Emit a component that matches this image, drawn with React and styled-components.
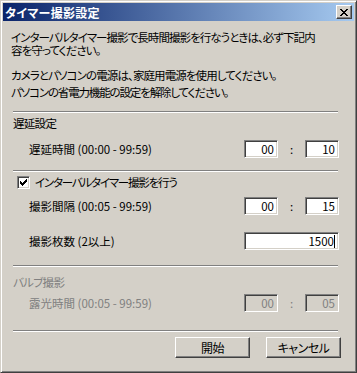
import styled, { createGlobalStyle } from 'styled-components';

const GlobalStyle = createGlobalStyle`
    html, body {
        margin: 0;
        padding: 0;
        background: #d4d0c8;
    }
    body {
        font-family: "Noto Sans CJK JP", sans-serif;
    }
`

const Window = styled.div`
    width: 357px;
    height: 373px;
    box-sizing: border-box;
    display: flex;
    flex-direction: column;
    padding: 2px;
    background: #d4d0c8;
    border: 1px solid;
    border-color: #d4d0c8 #404040 #404040 #d4d0c8;
    box-shadow: inset 1px 1px #ffffff, inset -1px -1px #808080;
`

const TitleBar = styled.div`
    height: 18px;
    display: flex;
    align-items: center;
    padding: 0 2px 0 2px;
    background: linear-gradient(to right, #0a246a, #a6caf0);
    color: #ffffff;
    font-size: 12px;
    font-weight: bold;
    font-feature-settings: "palt";
    letter-spacing: 0.3px;
`

const CloseButton = styled.div`
    margin-left: auto;
    width: 16px;
    height: 14px;
    box-sizing: border-box;
    display: flex;
    align-items: center;
    justify-content: center;
    background: #d4d0c8;
    border: 1px solid;
    border-color: #ffffff #404040 #404040 #ffffff;
    box-shadow: inset -1px -1px #808080;
`

const Body = styled.div`
    flex: 1;
    display: flex;
    flex-direction: column;
    padding: 10px 15px 0 10px;
    font-size: 11.5px;
    line-height: 13px;
    letter-spacing: -0.7px;
    color: #000000;
    font-feature-settings: "palt";
`

const Para = styled.div`
    margin-left: -2px;
    margin-top: ${p => p.$mt || 0}px;
    letter-spacing: ${p => p.$ls}px;
    white-space: nowrap;
`

const Separator = styled.div`
    margin-top: ${p => p.$mt}px;
    border-top: 1px solid #808080;
    border-bottom: 1px solid #ffffff;
    margin-right: 1px;
`

const Heading = styled.div`
    margin-top: ${p => p.$mt}px;
    color: ${p => (p.$disabled ? '#808080' : '#000000')};
`

const Row = styled.div`
    margin-top: ${p => p.$mt}px;
    height: 18px;
    display: flex;
    align-items: center;
    padding-left: 16px;
`

const Label = styled.span`
    color: ${p => (p.$disabled ? '#808080' : '#000000')};
    white-space: nowrap;
    letter-spacing: 0;
`

const TimeGroup = styled.div`
    margin-left: auto;
    display: flex;
    align-items: center;
    letter-spacing: 0;
`

const Colon = styled.span`
    width: 27px;
    text-align: center;
    color: ${p => (p.$disabled ? '#808080' : '#000000')};
`

const Edit = styled.div`
    width: ${p => (p.$wide ? 95 : 34)}px;
    height: 18px;
    box-sizing: border-box;
    display: flex;
    align-items: center;
    justify-content: flex-end;
    padding-right: 3px;
    background: ${p => (p.$disabled ? '#d4d0c8' : '#ffffff')};
    color: ${p => (p.$disabled ? '#808080' : '#000000')};
    border: 1px solid;
    border-color: #808080 #ffffff #ffffff #808080;
    box-shadow: inset 1px 1px #404040, inset -1px -1px #d4d0c8;
`

const Caret = styled.span`
    width: 1px;
    height: 13px;
    background: #000000;
`

const CheckRow = styled.label`
    margin-top: ${p => p.$mt}px;
    display: flex;
    align-items: center;
    gap: 5px;
    padding-left: 4px;
    letter-spacing: -1.2px;
`

const CheckBox = styled.span`
    width: 13px;
    height: 13px;
    box-sizing: border-box;
    display: flex;
    align-items: center;
    justify-content: center;
    background: #ffffff;
    border: 1px solid;
    border-color: #808080 #ffffff #ffffff #808080;
    box-shadow: inset 1px 1px #404040, inset -1px -1px #d4d0c8;
`

const ButtonBar = styled.div`
    margin-top: ${p => p.$mt}px;
    margin-right: -2px;
    display: flex;
    justify-content: flex-end;
    gap: 16px;
`

const Button = styled.button`
    width: 75px;
    height: 21px;
    box-sizing: border-box;
    padding: 0;
    font-family: inherit;
    font-size: 12px;
    letter-spacing: -0.5px;
    font-feature-settings: "palt";
    color: #000000;
    background: #d4d0c8;
    border: 1px solid;
    border-color: #ffffff #404040 #404040 #ffffff;
    box-shadow: inset -1px -1px #808080;
`

const TimeInput = ({ min, sec, disabled }) => (
    <TimeGroup>
        <Edit $disabled={disabled}>{min}</Edit>
        <Colon $disabled={disabled}>:</Colon>
        <Edit $disabled={disabled}>{sec}</Edit>
    </TimeGroup>
);

const App = () => {
    return (
        <>
            <GlobalStyle />
            <Window>
                <TitleBar>
                    <span>タイマー撮影設定</span>
                    <CloseButton>
                        <svg width="8" height="7" viewBox="0 0 8 7" shapeRendering="crispEdges">
                            <path d="M0 0h2v1H0zM6 0h2v1H6zM1 1h2v1H1zM5 1h2v1H5zM2 2h4v1H2zM3 3h2v1H3zM2 4h4v1H2zM1 5h2v1H1zM5 5h2v1H5zM0 6h2v1H0zM6 6h2v1H6z" fill="#000" />
                        </svg>
                    </CloseButton>
                </TitleBar>
                <Body>
                    <Para $ls={-0.95}>
                        インターバルタイマー撮影で長時間撮影を行なうときは、必ず下記内<br />
                        容を守ってください。
                    </Para>
                    <Para $mt={12} $ls={-0.9}>カメラとパソコンの電源は、家庭用電源を使用してください。</Para>
                    <Para $mt={4} $ls={-1.15}>パソコンの省電力機能の設定を解除してください。</Para>

                    <Separator $mt={12} />
                    <Heading $mt={4}>遅延設定</Heading>
                    <Row $mt={10}>
                        <Label>遅延時間 (00:00 - 99:59)</Label>
                        <TimeInput min="00" sec="10" />
                    </Row>

                    <Separator $mt={12} />
                    <CheckRow $mt={4}>
                        <CheckBox>
                            <svg width="7" height="7" viewBox="0 0 7 7" shapeRendering="crispEdges">
                                <path d="M6 0h1v1H6zM5 1h2v1H5zM0 2h1v1H0zM4 2h3v1H4zM0 3h2v1H0zM3 3h3v1H3zM0 4h5v1H0zM1 5h3v1H1zM2 6h1v1H2z" fill="#000" />
                            </svg>
                        </CheckBox>
                        <span>インターバルタイマー撮影を行う</span>
                    </CheckRow>
                    <Row $mt={8}>
                        <Label>撮影間隔 (00:05 - 99:59)</Label>
                        <TimeInput min="00" sec="15" />
                    </Row>
                    <Row $mt={17}>
                        <Label>撮影枚数 (2以上)</Label>
                        <TimeGroup>
                            <Edit $wide>
                                1500<Caret />
                            </Edit>
                        </TimeGroup>
                    </Row>

                    <Separator $mt={15} />
                    <Heading $mt={9} $disabled>バルブ撮影</Heading>
                    <Row $mt={5}>
                        <Label $disabled>露光時間 (00:05 - 99:59)</Label>
                        <TimeInput min="00" sec="05" disabled />
                    </Row>

                    <Separator $mt={18} />
                    <ButtonBar $mt={5}>
                        <Button>開始</Button>
                        <Button>キャンセル</Button>
                    </ButtonBar>
                </Body>
            </Window>
        </>
    );
};

export default App;
